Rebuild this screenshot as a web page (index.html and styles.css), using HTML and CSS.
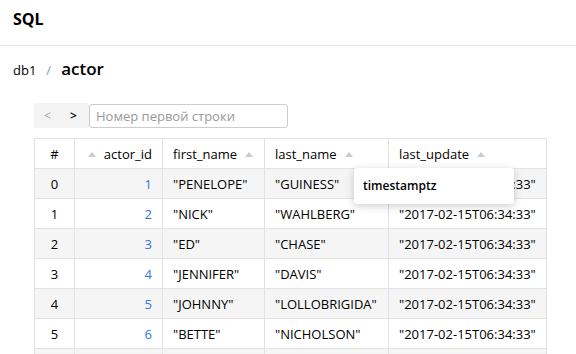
FILE: index.html
```html
<!DOCTYPE html>
<html>
<head>
<meta charset="utf-8">
<title>SQL</title>
<link rel="stylesheet" href="styles.css">
</head>
<body>

<div class="header">SQL</div>

<div class="breadcrumbs">
    <span class="crumb">db1</span>
    <span class="sep">/</span>
    <span class="current">actor</span>
</div>

<div class="content">
    <div class="pager">
        <div class="pager_buttons">
            <span class="pager_btn disabled">&lt;</span>
            <span class="pager_btn">&gt;</span>
        </div>
        <input class="pager_input" type="text" placeholder="Номер первой строки">
    </div>

    <div class="table_wrap">
        <table class="data">
            <colgroup>
                <col class="col_num">
                <col class="col_id">
                <col class="col_first">
                <col class="col_last">
                <col class="col_update">
            </colgroup>
            <thead>
                <tr>
                    <th class="num">#</th>
                    <th class="id"><span class="sort"></span>actor_id</th>
                    <th>first_name<span class="sort after"></span></th>
                    <th>last_name<span class="sort after"></span></th>
                    <th>last_update<span class="sort after"></span></th>
                </tr>
            </thead>
            <tbody>
                <tr><td class="num">0</td><td class="id">1</td><td>"PENELOPE"</td><td>"GUINESS"</td><td>"2017-02-15T06:34:33"</td></tr>
                <tr><td class="num">1</td><td class="id">2</td><td>"NICK"</td><td>"WAHLBERG"</td><td>"2017-02-15T06:34:33"</td></tr>
                <tr><td class="num">2</td><td class="id">3</td><td>"ED"</td><td>"CHASE"</td><td>"2017-02-15T06:34:33"</td></tr>
                <tr><td class="num">3</td><td class="id">4</td><td>"JENNIFER"</td><td>"DAVIS"</td><td>"2017-02-15T06:34:33"</td></tr>
                <tr><td class="num">4</td><td class="id">5</td><td>"JOHNNY"</td><td>"LOLLOBRIGIDA"</td><td>"2017-02-15T06:34:33"</td></tr>
                <tr><td class="num">5</td><td class="id">6</td><td>"BETTE"</td><td>"NICHOLSON"</td><td>"2017-02-15T06:34:33"</td></tr>
                <tr class="last"><td class="num"></td><td class="id"></td><td></td><td></td><td></td></tr>
            </tbody>
        </table>
        <div class="tooltip">timestamptz</div>
    </div>
</div>

</body>
</html>
```

FILE: styles.css
```css
body {
    margin: 0;
    padding: 0;
    color: #000;
    font: 13px/16px "Open Sans", "Noto Sans", sans-serif;
    overflow: hidden;
}
.header {
    height: 45px;
    line-height: 38px;
    padding: 0 13px;
    font-size: 16px;
    font-weight: bold;
    border-bottom: 1px solid #e6e6e6;
}
.breadcrumbs {
    display: flex;
    align-items: baseline;
    padding: 15px 13px 0 13px;
    height: 26px;
}
.crumb {
    font-size: 13px;
}
.sep {
    color: #999;
    margin: 0 10px;
}
.current {
    font-size: 17px;
    font-weight: 600;
}
.content {
    padding: 16px 0 0 34px;
}
.pager {
    display: flex;
    align-items: center;
    height: 25px;
}
.pager_buttons {
    display: flex;
    align-items: center;
    background: #f3f3f3;
    height: 25px;
    width: 55px;
}
.pager_btn {
    width: 13px;
    text-align: center;
    margin-left: 7px;
    font-size: 12px;
    font-weight: 600;
}
.pager_btn + .pager_btn {
    margin-left: 13px;
}
.pager_btn.disabled {
    color: #aaa;
    font-weight: normal;
}
.pager_input {
    box-sizing: border-box;
    width: 199px;
    height: 24px;
    margin: 0;
    padding: 0 6px;
    border: 1px solid #ccc;
    border-radius: 3px;
    font: 13px "Open Sans", "Noto Sans", sans-serif;
    color: #000;
}
.pager_input::placeholder {
    color: #999;
}
.table_wrap {
    position: relative;
    margin-top: 10px;
}
.data {
    border-collapse: collapse;
    table-layout: fixed;
    width: 512px;
}
.col_num { width: 40px; }
.col_id { width: 88px; }
.col_first { width: 102px; }
.col_last { width: 124px; }
.col_update { width: 158px; }
.data th, .data td {
    border: 1px solid #e2e2e2;
    height: 29px;
    padding: 0 10px;
    white-space: nowrap;
    overflow: hidden;
    text-align: left;
}
.data th {
    font-weight: 500;
    font-size: 13px;
    background: #fff;
}
.data th.num, .data td.num {
    text-align: center;
    padding: 0;
}
.data th.id, .data td.id {
    text-align: right;
}
.data td.id {
    color: #2f76e0;
}
.data tbody tr:nth-child(odd) td {
    background: #f5f5f5;
}
.data tr.last td {
    height: 8px;
}
.sort {
    display: inline-block;
    width: 0;
    height: 0;
    border-left: 4px solid transparent;
    border-right: 4px solid transparent;
    border-bottom: 5px solid #ccc;
    margin: 0 8px 2px 0;
    vertical-align: middle;
}
.sort.after {
    margin: 0 0 2px 8px;
}
.tooltip {
    position: absolute;
    left: 320px;
    top: 30px;
    width: 151px;
    height: 36px;
    line-height: 36px;
    padding-left: 9px;
    background: #fff;
    font-size: 12px;
    font-weight: 600;
    box-shadow: 0 2px 8px rgba(0, 0, 0, 0.2);
    border-radius: 3px;
}
```
